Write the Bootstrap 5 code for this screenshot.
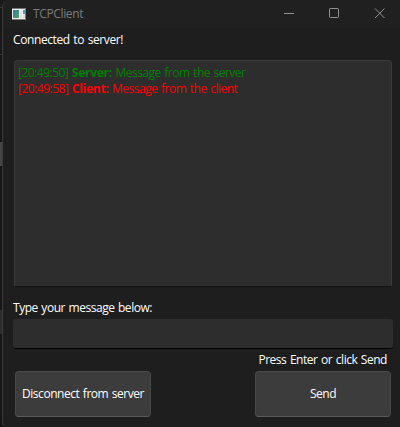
<!DOCTYPE html>
<html lang="en" data-bs-theme="dark">
<head>
<meta charset="utf-8">
<title>TCPClient</title>
<link href="https://cdn.jsdelivr.net/npm/bootstrap@5.3.0/dist/css/bootstrap.min.css" rel="stylesheet">
<style>
body { width: 400px; height: 427px; font: 12px/16px "Open Sans", "Noto Sans", sans-serif; color: #fff;
  background: linear-gradient(#1b1b1b 0 7px, #383838 7px 8px, #171717 8px 54px, #333 54px 55px, #151515 55px 142px, #454545 142px 166px, #151515 166px 310px, #2c2c2c 310px 334px, #151515 334px); }
.app-window { height: 427px; margin-left: 2px; padding: 0 7px 0 10px; background: #1e1e1e; border-left: 1px solid #3c3c3c; border-radius: 8px 0 0 5px; letter-spacing: -.47px; word-spacing: .9px; }
.title-bar { height: 28px; margin: 0 -7px 0 -10px; padding: 0 15px 0 9px; background: #202020; border-top-left-radius: 8px; color: #7b7b7b; }
.title-text { margin-left: 7px; letter-spacing: -.36px; }
.caption-icons { gap: 35px; }
.status-line { margin-top: 4px; letter-spacing: -.4px; }
.log-box { height: 227px; margin: 12px 1px 0; padding: 4px 3px; background: #2d2d2d; border: 1px solid #3b3b3b; border-bottom-color: #121212; border-radius: 4px 4px 2px 2px; letter-spacing: -.5px; }
.log-box b { letter-spacing: -.27px; }
.log-server { color: #008000; }
.log-client { color: #f00; }
.prompt-label { margin-top: 13px; }
.message-input.form-control { height: 30px; min-height: 0; margin-top: 3px; padding: 0 6px; background: #2d2d2d; border: 0; border-bottom: 1px solid #000; border-radius: 3px; }
.hint { margin: 3px 6px 0 0; }
.action-row { margin: 3px 2px 0; }
.action-btn.btn { width: 136px; height: 46px; padding: 0; font-size: 12px; line-height: 16px; color: #fff; background: #3c3c3c; border: 1px solid #484848; border-bottom-color: #5b5b5b; border-radius: 4px; letter-spacing: -.47px; word-spacing: .9px; }
</style>
<script src="https://cdn.jsdelivr.net/npm/bootstrap@5.3.0/dist/js/bootstrap.bundle.min.js"></script>
</head>
<body class="overflow-hidden m-0">
<main class="app-window d-flex flex-column">
  <header class="title-bar d-flex align-items-center justify-content-between flex-shrink-0">
    <div class="d-flex align-items-center">
      <svg width="14" height="12" viewBox="0 0 14 12" shape-rendering="crispEdges">
        <defs><linearGradient id="pane" x2="1" y2="1"><stop stop-color="#3978a8"/><stop offset="1" stop-color="#4fa866"/></linearGradient></defs>
        <path fill="#777" d="M0 0h14v12H0z"/><path fill="#eee" d="M0 1h13v10H0z"/>
        <path fill="url(#pane)" d="M1 2h6v8H1z"/><path fill="#e4e4e4" d="M8 3h2v7H8z"/><path fill="#5b9ab0" d="M11 2h2v4h-2z"/><path fill="#ddd" d="M11 7h2v3h-2z"/>
      </svg>
      <span class="title-text">TCPClient</span>
    </div>
    <div class="caption-icons d-flex align-items-center">
      <svg width="10" height="12"><path d="M0 5.5h10" stroke="#929292"/></svg>
      <svg width="10" height="12"><rect x=".5" y=".5" width="9" height="9" rx=".7" fill="none" stroke="#929292"/></svg>
      <svg width="11" height="12"><path d="M1 .5l9.5 9.5m0-9.5L1 10" stroke="#929292"/></svg>
    </div>
  </header>
  <div class="status-line"><span>Connected to server!</span></div>
  <section class="log-box flex-shrink-0">
    <div class="log-server">[20:49:50] <b>Server:</b> Message from the server</div>
    <div class="log-client">[20:49:58] <b>Client:</b> Message from the client</div>
  </section>
  <label class="prompt-label" for="message">Type your message below:</label>
  <input id="message" class="message-input form-control flex-shrink-0" type="text">
  <div class="hint text-end">Press Enter or click Send</div>
  <div class="action-row d-flex justify-content-between">
    <button type="button" class="action-btn btn btn-secondary">Disconnect from server</button>
    <button type="button" class="action-btn btn btn-secondary">Send</button>
  </div>
</main>
</body>
</html>
